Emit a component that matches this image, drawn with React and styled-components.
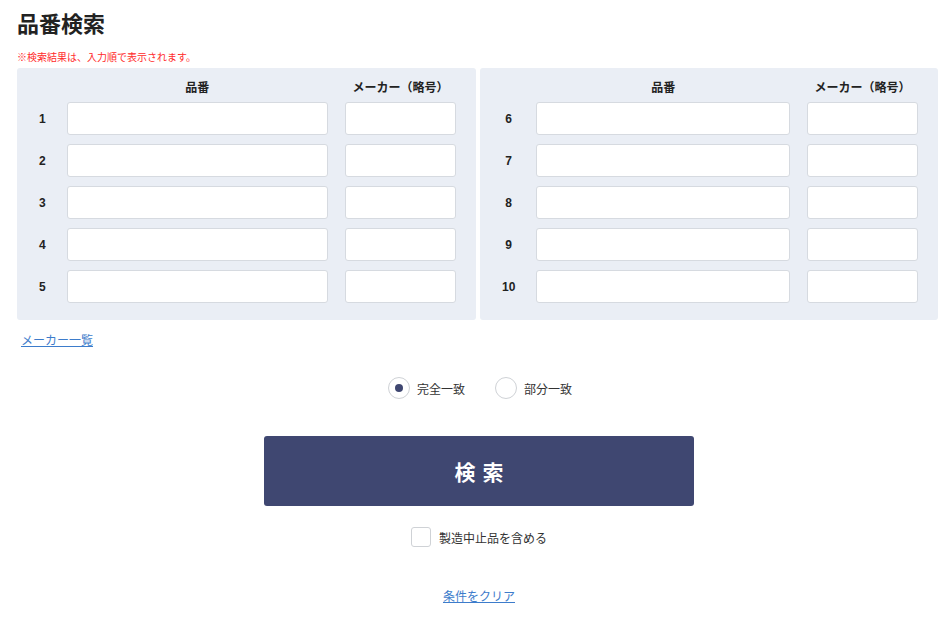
import React from "react";
import styled, { createGlobalStyle } from "styled-components";

const GlobalStyle = createGlobalStyle`
    body {
        margin: 0;
        background: #ffffff;
        color: #222222;
        font-family: "Liberation Sans", "Noto Sans CJK JP", sans-serif;
    }
`;

const leftRows = [1, 2, 3, 4, 5];
const rightRows = [6, 7, 8, 9, 10];

const App = () => {
    return (
        <>
            <GlobalStyle />
            <Page>
                <Title>品番検索</Title>
                <Note>※検索結果は、入力順で表示されます。</Note>
                <Panels>
                    <SearchPanel rows={leftRows} />
                    <SearchPanel rows={rightRows} />
                </Panels>
                <MakerLink href="#">メーカー一覧</MakerLink>
                <Center>
                    <RadioGroup>
                        <RadioLabel>
                            <RadioCircle checked />
                            完全一致
                        </RadioLabel>
                        <RadioLabel>
                            <RadioCircle />
                            部分一致
                        </RadioLabel>
                    </RadioGroup>
                    <SearchButton type="button">検索</SearchButton>
                    <CheckLabel>
                        <CheckBox />
                        製造中止品を含める
                    </CheckLabel>
                    <ClearLink href="#">条件をクリア</ClearLink>
                </Center>
            </Page>
        </>
    );
};

const SearchPanel = ({ rows }) => (
    <Panel>
        <span />
        <HeadCell>品番</HeadCell>
        <HeadCell>メーカー（略号）</HeadCell>
        {rows.map((n) => (
            <React.Fragment key={n}>
                <RowNum>{n}</RowNum>
                <TextInput type="text" />
                <TextInput type="text" />
            </React.Fragment>
        ))}
    </Panel>
);

//Styled-Components
const Page = styled.div`
    margin: 0 9px 0 17px;
    padding-top: 10px;
`;
const Title = styled.h1`
    margin: 0;
    font-size: 22px;
    line-height: 30px;
    font-weight: bold;
    color: #222;
`;
const Note = styled.p`
    margin: 11px 0 3px;
    font-size: 10px;
    line-height: 14px;
    color: #ff2a2a;
`;
const Panels = styled.div`
    display: grid;
    grid-template-columns: 459px 458px;
    gap: 4px;
`;
const Panel = styled.div`
    display: grid;
    grid-template-columns: auto 1fr 111px;
    grid-template-rows: 9px repeat(5, 33px);
    column-gap: 17px;
    row-gap: 9px;
    align-items: center;
    padding: 16px 20px 17px 0;
    background: #eaeef5;
    border-radius: 3px;
`;
const HeadCell = styled.div`
    font-size: 12px;
    font-weight: bold;
    line-height: 13px;
    text-align: center;
    color: #222;
    white-space: nowrap;
`;
const RowNum = styled.div`
    font-size: 12px;
    font-weight: bold;
    text-align: center;
    padding: 0 4px 0 22px;
    color: #222;
`;
const TextInput = styled.input`
    box-sizing: border-box;
    width: 100%;
    height: 33px;
    margin: 0;
    border: 1px solid #d6dae0;
    border-radius: 3px;
    background: #fff;
    font-size: 13px;
    padding: 0 8px;
`;
const MakerLink = styled.a`
    display: inline-block;
    margin: 13px 0 0 4px;
    font-size: 12px;
    line-height: 16px;
    color: #3d7ccb;
    text-decoration: underline;
`;
const Center = styled.div`
    display: flex;
    flex-direction: column;
    align-items: center;
`;
const RadioGroup = styled.div`
    display: flex;
    gap: 30px;
    margin-top: 28px;
    padding-left: 2px;
`;
const RadioLabel = styled.label`
    display: flex;
    align-items: center;
    gap: 7px;
    font-size: 12px;
    color: #333;
`;
const RadioCircle = styled.span`
    box-sizing: border-box;
    width: 22px;
    height: 22px;
    border-radius: 50%;
    border: 1px solid #cfd2d6;
    background: #fff;
    display: flex;
    align-items: center;
    justify-content: center;
    &::after {
        content: "";
        width: 8px;
        height: 8px;
        border-radius: 50%;
        background: ${(p) => (p.checked ? "#3f4771" : "transparent")};
    }
`;
const SearchButton = styled.button`
    margin-top: 37px;
    width: 430px;
    height: 70px;
    border: none;
    border-radius: 3px;
    background: #3f4771;
    color: #fff;
    font-family: "Liberation Sans", "Noto Sans CJK JP", sans-serif;
    font-size: 21px;
    font-weight: bold;
    letter-spacing: 7px;
    padding: 0 0 0 7px;
    cursor: pointer;
`;
const CheckLabel = styled.label`
    display: flex;
    align-items: center;
    gap: 8px;
    margin-top: 21px;
    font-size: 12px;
    color: #333;
`;
const CheckBox = styled.span`
    box-sizing: border-box;
    width: 20px;
    height: 20px;
    border: 1px solid #cfd2d6;
    border-radius: 3px;
    background: #fff;
`;
const ClearLink = styled.a`
    margin-top: 42px;
    font-size: 12px;
    line-height: 16px;
    color: #3d7ccb;
    text-decoration: underline;
`;

export default App;
